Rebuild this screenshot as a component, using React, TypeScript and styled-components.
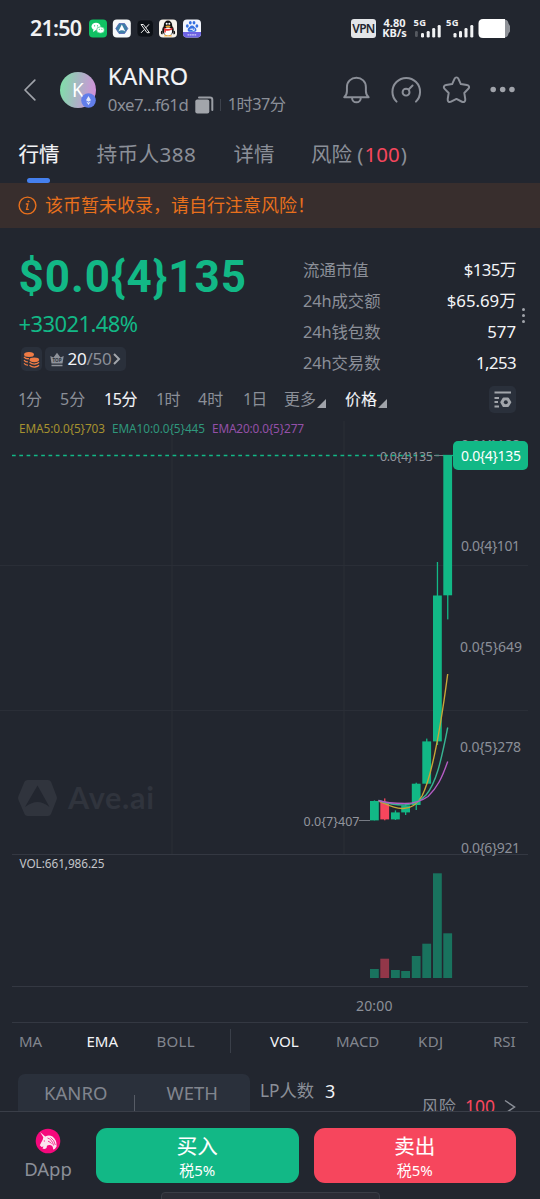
import React from "react";
import styled, { createGlobalStyle } from "styled-components";

const c = {
  bg: "#22262f",
  green: "#12b886",
  red: "#f6465d",
  grey: "#8b8f98",
  dim: "#81858e",
  white: "#f3f4f7",
  line: "#343842",
  panel: "#2a303b",
  orange: "#e8701c",
};

const family = `"Noto Sans", "Noto Sans CJK SC", sans-serif`;

const GlobalStyle = createGlobalStyle`
  * { box-sizing: border-box; }
  html, body { margin: 0; background: ${c.bg}; }
  body { font-family: ${family}; overflow: hidden; }
`;

const Screen = styled.div`
  width: 540px;
  height: 1199px;
  display: flex;
  flex-direction: column;
  overflow: hidden;
  background: ${c.bg};
  color: ${c.grey};
`;

const Text = styled.span<{ $size: number; $color?: string; $weight?: number; $spacing?: number; $stroke?: number }>`
  display: block;
  font-size: ${(p) => p.$size}px;
  line-height: ${(p) => Math.round(p.$size * 1.3)}px;
  color: ${(p) => p.$color ?? c.grey};
  font-weight: ${(p) => p.$weight ?? 400};
  letter-spacing: ${(p) => p.$spacing ?? 0}px;
  -webkit-text-stroke: ${(p) => p.$stroke ?? 0}px currentColor;
  white-space: nowrap;
`;

/* ---------- status bar ---------- */
const StatusBar = styled.div`
  flex: none;
  height: 56px;
  padding-left: 30px;
  display: flex;
  align-items: center;
`;
const AppIcons = styled.svg`
  flex: none;
  margin-left: 7px;
`;
const Clock = styled(Text)`
  width: 52px;
`;
const VpnTag = styled.span`
  flex: none;
  margin-left: 148px;
  width: 25px;
  height: 19px;
  border-radius: 3px;
  background: #e3e5e8;
  color: #22262f;
  font-size: 12px;
  font-weight: 600;
  letter-spacing: -0.7px;
  line-height: 19px;
  text-align: center;
`;
const Speed = styled.div`
  flex: none;
  width: 27px;
  margin-left: 5px;
  font-size: 11px;
  font-weight: 700;
  line-height: 10px;
  color: #f0f1f3;
  text-align: center;
  white-space: nowrap;
`;
const Signals = styled.svg`
  flex: none;
  margin-left: 5px;
  overflow: visible;
`;

/* ---------- header ---------- */
const Header = styled.header`
  flex: none;
  height: 74px;
  padding: 0 24px 6px 22px;
  display: flex;
  align-items: center;
`;
const Avatar = styled.div`
  position: relative;
  flex: none;
  width: 36px;
  height: 36px;
  margin-left: 22px;
  border-radius: 50%;
  background: linear-gradient(100deg, #7fe0a8 5%, #a9b4c4 50%, #d58fdc 95%);
  color: #fff;
  font-size: 19px;
  line-height: 36px;
  text-align: center;
`;
const ChainBadge = styled.svg`
  position: absolute;
  right: 0;
  bottom: 0;
`;
const TokenInfo = styled.div`
  flex: none;
  width: 234.5px;
  margin-left: 12px;
  padding-bottom: 2px;
`;
const TokenMeta = styled.div`
  display: flex;
  align-items: center;
  height: 26px;
`;
const Address = styled(Text)`
  width: 86px;
`;
const Sep = styled.i`
  width: 1px;
  height: 12px;
  margin: 0 7px 0 6px;
  background: #3d424c;
`;

/* ---------- tabs ---------- */
const Tabs = styled.nav`
  flex: none;
  height: 53px;
  padding: 11px 0 0 18.5px;
  display: grid;
  grid-template-columns: 78px 137px 77.5px auto;
  justify-content: start;
  align-items: start;
`;
const Tab = styled.div`
  display: flex;
  flex-direction: column;
`;
const TabMarker = styled.i`
  width: 23px;
  height: 5px;
  margin: 10px 0 0 8.5px;
  border-radius: 2.5px;
  background: #4580ee;
`;
const Risk = styled.span`
  margin: 0 1px;
  color: ${c.red};
`;

const Banner = styled.div`
  flex: none;
  height: 45px;
  padding-left: 18px;
  display: flex;
  align-items: center;
  gap: 8px;
  background: #382e2d;
`;

/* ---------- summary ---------- */
const Summary = styled.section`
  flex: none;
  height: 154px;
  display: flex;
`;
const PriceColumn = styled.div`
  width: 303px;
  padding: 21px 0 0 18.5px;
`;
const Price = styled.div`
  height: 60px;
  font-family: Roboto, "Noto Sans", sans-serif;
  font-size: 44px;
  font-weight: 700;
  letter-spacing: 1px;
  line-height: 56px;
  color: ${c.green};
`;
const Chips = styled.div`
  display: flex;
  gap: 3px;
  margin: 9px 0 0 2.5px;
`;
const Chip = styled.div`
  height: 24px;
  min-width: 21px;
  border-radius: 5px;
  background: ${c.panel};
  display: flex;
  align-items: center;
  justify-content: center;
`;
const RankChip = styled(Chip)`
  width: 81px;
`;
const Rank = styled(Text)`
  margin-left: 3px;
`;
const Stats = styled.div`
  width: 213px;
  padding-top: 26px;
`;
const StatRow = styled.div`
  height: 31px;
  display: flex;
  align-items: center;
  justify-content: space-between;
`;
const MoreDots = styled.svg`
  margin: 79px 0 0 5px;
`;

/* ---------- periods ---------- */
const Periods = styled.div`
  flex: none;
  height: 34px;
  padding-left: 18px;
  display: grid;
  grid-template-columns: 42px 44px 52px 42px 45px 41px 61px 144px 27px;
  align-items: center;
`;
const Dropdown = styled.div`
  display: flex;
  align-items: center;
  gap: 1px;
`;
const Corner = styled.i`
  width: 0;
  height: 0;
  margin-top: 9px;
  border-left: 9px solid transparent;
  border-bottom: 9px solid #a0a3aa;
`;
const SettingsButton = styled.div`
  width: 27px;
  height: 27px;
  border-radius: 5px;
  background: ${c.panel};
`;
const ChartCanvas = styled.svg`
  flex: none;
  display: block;
`;

/* ---------- indicators and pool ---------- */
const Indicators = styled.div`
  flex: none;
  height: 38px;
  padding: 0 0 2px 19px;
  display: grid;
  grid-template-columns: 67.5px 70px 73.5px 40px 66px 82px 75px 24px;
  align-items: center;
`;
const IndicatorDivider = styled.i`
  width: 1px;
  height: 24px;
  background: #3a3f49;
`;
const Pool = styled.div`
  flex: none;
  height: 50px;
  padding: 13px 0 0 18px;
  display: flex;
  align-items: flex-start;
  overflow: hidden;
`;
const PoolTokens = styled.div`
  flex: none;
  width: 232px;
  height: 50px;
  border-radius: 7px 7px 0 0;
  background: ${c.panel};
  display: flex;
`;
const PoolToken = styled.div`
  width: 116px;
  padding-top: 7px;
  display: flex;
  justify-content: center;
`;
const PoolDivider = styled.i`
  width: 1px;
  height: 30px;
  margin-top: 21px;
  background: #575c66;
`;
const Holders = styled.div`
  flex: none;
  width: 161.5px;
  margin: 6px 0 0 10px;
  display: flex;
  gap: 11px;
`;
const PoolRisk = styled.div`
  margin-top: 21px;
  display: flex;
  align-items: center;
  gap: 9px;
`;

/* ---------- footer ---------- */
const Footer = styled.footer`
  flex: none;
  height: 81px;
  border-top: 1px solid #3a3e48;
  padding: 16px 0 0 18px;
  display: flex;
`;
const DApp = styled.div`
  flex: none;
  width: 60px;
  margin-right: 18px;
  display: flex;
  flex-direction: column;
  align-items: center;
  gap: 3px;
`;
const TradeButton = styled.div<{ $bg: string }>`
  flex: none;
  width: 202.5px;
  height: 55px;
  margin-right: 15px;
  padding-top: 5px;
  border-radius: 11px;
  background: ${(p) => p.$bg};
  display: flex;
  flex-direction: column;
  align-items: center;
`;
const HomeHandle = styled.div`
  flex: none;
  width: 219px;
  height: 12px;
  margin-left: 161px;
  border: 1px solid #3a3d46;
  border-radius: 4px;
  background: #2b2c35;
`;

type Candle = { x: number; top: number; bottom: number; high: number; low: number; vol: number; down?: boolean };
const candles: Candle[] = [
  { x: 370, top: 801, bottom: 820.4, high: 800.4, low: 820.4, vol: 969 },
  { x: 380.3, top: 802, bottom: 819.4, high: 798.4, low: 820.3, vol: 958.7, down: true },
  { x: 391, top: 812.4, bottom: 819.4, high: 810.4, low: 820, vol: 970 },
  { x: 401.2, top: 805.4, bottom: 812.4, high: 803.4, low: 815, vol: 971 },
  { x: 411.8, top: 783.7, bottom: 805, high: 782.7, low: 810, vol: 956 },
  { x: 422.3, top: 741.4, bottom: 783.7, high: 738.6, low: 784.3, vol: 943.7 },
  { x: 433, top: 595.5, bottom: 741.4, high: 562, low: 745, vol: 873.3 },
  { x: 443.3, top: 455.4, bottom: 595.3, high: 455.4, low: 619.4, vol: 933.3 },
];

const axis: [string, number, number, number][] = [
  ["0.0{4}188", 461, 445, 59],
  ["0.0{4}101", 461, 546, 59],
  ["0.0{5}649", 460, 646.5, 62],
  ["0.0{5}278", 460, 747, 61],
  ["0.0{6}921", 461, 847.5, 59],
];

function Chart() {
  return (
    <ChartCanvas width="540" height="607" viewBox="0 416 540 607" fontFamily={family}>
      <g stroke="#2a2e37" strokeWidth="1">
        <path d="M172 421V854M344 421V854M0 565.5H528M0 710.5H528" />
      </g>
      <path d="M12 854.5H528M12 986.5H528M12 1022.5H528" stroke={c.line} strokeWidth="1" />
      <g fontSize="11.8">
        <text x="19" y="433" fill="#a6922f" textLength="86">EMA5:0.0{"{5}"}703</text>
        <text x="112" y="433" fill="#2f977c" textLength="93">EMA10:0.0{"{5}"}445</text>
        <text x="212" y="433" fill="#9450a8" textLength="92">EMA20:0.0{"{5}"}277</text>
        <text x="19.5" y="868" fill="#c3c5ca" textLength="85">VOL:661,986.25</text>
      </g>
      <g fill="#30343d">
        <path d="M27.5 780H48Q50 780 51 781.8L56.5 796Q57.5 798 56.5 800L51 814Q50 816 48 816H27.5Q25.5 816 24.5 814L18.5 800Q17.5 798 18.5 796L24.5 781.8Q25.5 780 27.5 780Z" />
        <path d="M37.5 785.5L49.5 807Q43 802 37.5 802Q32 802 25 807Z" fill={c.bg} />
        <text x="68" y="809" fontSize="30.5" fontWeight="700" fontFamily="Lato, sans-serif" textLength="86">Ave.ai</text>
      </g>
      {candles.map((k) => (
        <g key={k.x} fill={k.down ? c.red : c.green}>
          <rect x={k.x} y={k.top} width="8.8" height={k.bottom - k.top} />
          <rect x={k.x + 3.8} y={k.high} width="1.3" height={k.low - k.high} />
          <rect x={k.x} y={k.vol} width="8.8" height={978 - k.vol} fill={k.down ? "#923749" : "#19735e"} />
        </g>
      ))}
      <g fill="none" strokeWidth="1.4">
        <path d="M378.5 801C385 803 391 808 402 808.5C412 809 418 803 422 796C430 780 438 748 447.7 674" stroke="#c7a638" />
        <path d="M378.5 800.5C386 803 394 805 404 805C415 804.5 421 800.5 426 795C436 783 441 762 447.7 727.5" stroke="#38b392" />
        <path d="M378.5 800.5C386 803 396 803.5 405 803.5C415 803.5 423 800 428 796.5C437 788 442 778 447.7 761.5" stroke="#b55cc4" />
      </g>
      <path d="M12 455.5H443" stroke="#12b886" strokeWidth="1.3" strokeDasharray="3.7 3.6" />
      <path d="M434 455.5H443M359 820.5H370" stroke="#777b84" strokeWidth="1" />
      <path d="M443 455.5H453" stroke={c.green} strokeWidth="1.3" />
      <g fontSize="12.5" fill="#92959d">
        <text x="380" y="460.5" textLength="53">0.0{"{4}"}135</text>
        <text x="303.5" y="825.5" textLength="56">0.0{"{7}"}407</text>
      </g>
      <g fontSize="14" fill={c.grey}>
        {axis.map(([label, x, y, w]) => (
          <text key={label} x={x} y={y + 5} textLength={w}>{label}</text>
        ))}
        <text x="356" y="1011" textLength="36.5">20:00</text>
      </g>
      <rect x="453" y="441" width="75" height="29" rx="5" fill={c.green} />
      <text x="461" y="461" fontSize="14" fill="#fff" textLength="60">0.0{"{4}"}135</text>
    </ChartCanvas>
  );
}

function StatusIcons() {
  return (
    <AppIcons width="114" height="20" viewBox="89 18 114 20">
      <rect x="89" y="19.5" width="18" height="18" rx="4" fill="#10c163" />
      <ellipse cx="96" cy="26.5" rx="4.5" ry="3.8" fill="#fff" />
      <ellipse cx="100.5" cy="30" rx="3.9" ry="3.2" fill="#fff" stroke="#10c163" strokeWidth=".6" />
      <path d="M93.5 29.5L93 32L95.5 30.5Z" fill="#fff" />
      <g fill="#10c163"><circle cx="94.6" cy="25.8" r=".6" /><circle cx="97.5" cy="25.8" r=".6" /><circle cx="99.3" cy="29.3" r=".5" /><circle cx="101.9" cy="29.3" r=".5" /></g>
      <rect x="112.8" y="19.5" width="18" height="18" rx="4" fill="#f7f9fa" />
      <path d="M119 23.5H124.6L127.8 28.5L124.6 33.5H119L115.8 28.5Z" fill="#3d7fa6" stroke="#5363b2" strokeWidth=".8" strokeLinejoin="round" />
      <path d="M121.8 24.5L125.3 31.5Q121.8 29 118.3 31.5Z" fill="#fff" />
      <rect x="137" y="20" width="16.5" height="17" rx="4" fill="#0d1117" stroke="#2b2f36" strokeWidth=".6" />
      <path d="M141 24.5H143.4L149.4 32.7H147ZM149 24.3L145.9 27.8M144.3 29.5L141 32.9" fill="none" stroke="#f2f2f2" strokeWidth="1" />
      <rect x="159" y="19.5" width="18" height="18" rx="4" fill="#f7f3ec" />
      <ellipse cx="168" cy="30" rx="5.8" ry="5.5" fill="#111" />
      <ellipse cx="168" cy="25.5" rx="4.2" ry="5" fill="#111" />
      <path d="M162 31Q161 34 162.5 33.5M174 31Q175 34 173.5 33.5" stroke="#111" strokeWidth="1.5" />
      <ellipse cx="168" cy="31.5" rx="4" ry="4" fill="#fff" />
      <path d="M163.5 27.5Q168 30.5 172.5 27.5L172.3 29.5Q168 31.5 165.8 30.5V32.5H164.3V30Z" fill="#e12d2d" />
      <ellipse cx="168" cy="26.5" rx="2.6" ry=".9" fill="#f2a72c" />
      <circle cx="166.7" cy="23.8" r="1" fill="#fff" /><circle cx="169.3" cy="23.8" r="1" fill="#fff" />
      <path d="M164.5 36Q166 34.7 167.5 36ZM168.5 36Q170 34.7 171.5 36Z" fill="#f2a72c" stroke="#f2a72c" strokeWidth=".7" />
      <rect x="183" y="19.5" width="18" height="18" rx="4" fill="#f2f5fd" />
      <path d="M183 32H201V33.5Q201 37.5 197 37.5H187Q183 37.5 183 33.5Z" fill="#6d62e4" />
      <g fill="#346fe0">
        <ellipse cx="187.3" cy="26" rx="1.4" ry="1.8" /><ellipse cx="190.3" cy="22.8" rx="1.4" ry="1.8" />
        <ellipse cx="194" cy="22.8" rx="1.4" ry="1.8" /><ellipse cx="196.9" cy="26" rx="1.4" ry="1.8" />
        <path d="M192 25.5C190 25.5 189.5 27.5 188 28.5Q187 31 189 31.7H195Q197.3 31 196 28.5C194.5 27.5 194 25.5 192 25.5Z" />
      </g>
      <path d="M190 30A1 1 0 1 1 192 30V28.5M192.8 28.5V30.5H194.3V28.5" fill="none" stroke="#fff" strokeWidth=".8" />
      <path d="M187.5 34.8H196.5" stroke="#cfcaf8" strokeWidth="1.3" strokeDasharray="1.8 .5" />
    </AppIcons>
  );
}

function SignalIcons() {
  return (
    <Signals width="98" height="24" viewBox="413 16 98 24" fontFamily={family}>
      <g fill="#f1f2f4">
        <text x="413.5" y="26.2" fontSize="9.4" fontWeight="700" textLength="12.5">5G</text>
        <text x="446" y="26.2" fontSize="9.4" fontWeight="700" textLength="12.5">5G</text>
        <rect x="415" y="31" width="2.8" height="6" rx="1.2" fill="#555960" />
        <rect x="421" y="33" width="3" height="4.5" rx="1.3" />
        <rect x="426.7" y="31" width="3" height="6.5" rx="1.3" />
        <rect x="432.2" y="28" width="3" height="9.5" rx="1.3" />
        <rect x="437.7" y="25" width="3" height="12.5" rx="1.3" />
        <rect x="453.5" y="33" width="3" height="4.5" rx="1.3" />
        <rect x="459" y="31" width="3" height="6.5" rx="1.3" />
        <rect x="464.5" y="28" width="3" height="9.5" rx="1.3" />
        <rect x="470.3" y="25" width="3" height="12.5" rx="1.3" />
      </g>
      <path d="M500 19.5H504Q508 19.5 508.5 23.5L510 26V31.5L508.5 33.5Q508 37.5 504 37.5H500Z" fill="#8f9298" />
      <path d="M483 19H505V38H483Q478.5 38 478.5 33.5V23.5Q478.5 19 483 19Z" fill="#fff" />
    </Signals>
  );
}

export default function App() {
  return (
    <>
      <GlobalStyle />
      <Screen>
        <StatusBar>
          <Clock $size={21.5} $weight={600} $color="#f1f2f4" $spacing={-0.8}>21:50</Clock>
          <StatusIcons />
          <VpnTag>VPN</VpnTag>
          <Speed>4.80<br />KB/s</Speed>
          <SignalIcons />
        </StatusBar>

        <Header>
          <svg width="16" height="24" viewBox="22 78 16 24" fill="none" stroke="#a0a3aa" strokeWidth="1.7" strokeLinecap="round" strokeLinejoin="round">
            <path d="M35 80L25 90L35 100" />
          </svg>
          <Avatar>
            K
            <ChainBadge width="15" height="15" viewBox="0 0 15 15">
              <circle cx="7.5" cy="7.5" r="7.3" fill="#627eea" />
              <path d="M7.5 3L10 7.2L7.5 8.7L5 7.2ZM5.2 8.5L7.5 12L9.8 8.5L7.5 9.8Z" fill="#e4e9fb" />
            </ChainBadge>
          </Avatar>
          <TokenInfo>
            <Text $size={23.5} $stroke={0.15} $color={c.white}>KANRO</Text>
            <TokenMeta>
              <Address $size={16.8} $spacing={-0.5}>0xe7...f61d</Address>
              <svg width="20" height="20" viewBox="194 95 20 20">
                <path d="M199 97.5H210Q212.3 97.5 212.3 99.8V110" fill="none" stroke="#9a9da4" strokeWidth="2" strokeLinecap="round" />
                <rect x="195.3" y="99.5" width="14" height="14" rx="2" fill="#a2a5ab" />
              </svg>
              <Sep />
              <Text $size={16.2} $spacing={-0.5}>1时37分</Text>
            </TokenMeta>
          </TokenInfo>
          <svg width="176" height="32" viewBox="342 74 176 32" fill="none" stroke={c.grey} strokeWidth="2" strokeLinecap="round" strokeLinejoin="round">
            <path d="M344.2 97.3H369C366.8 95.5 366.2 93.5 366.2 91V87C366.2 81.5 362 77.6 356.6 77.6S347 81.5 347 87V91C347 93.5 346.4 95.5 344.2 97.3ZM352.2 98C352.2 100.5 354 102.4 356.6 102.4S361 100.5 361 98" />
            <path d="M397.3 101.8A14 14 0 1 1 416.9 101.8M409.5 89.5L413.5 85.5" />
            <circle cx="406.9" cy="92.2" r="3.5" />
            <path d="M458 77.2C459 77.2 459.6 77.8 460 78.7L462.4 84L468.5 85C471 85.5 471.5 87.3 470 88.8L465.9 93L466.9 99.2C467.2 101.6 465.5 102.9 463.5 101.9L458 99L452.5 101.9C450.5 102.9 448.8 101.6 449.1 99.2L450.1 93L446 88.8C444.5 87.3 445 85.5 447.5 85L453.6 84L456 78.7C456.4 77.8 457 77.2 458 77.2Z" />
            <g fill="#a0a3aa" stroke="none"><circle cx="495.2" cy="89.6" r="2.8" /><circle cx="504.8" cy="89.6" r="2.8" /><circle cx="514.2" cy="89.6" r="2.8" /></g>
          </svg>
        </Header>

        <Tabs>
          <Tab>
            <Text $size={20.5} $stroke={0.15} $color={c.white}>行情</Text>
            <TabMarker />
          </Tab>
          <Tab><Text $size={20.7} $spacing={0.35}>持币人388</Text></Tab>
          <Tab><Text $size={20.5}>详情</Text></Tab>
          <Tab><Text $size={20.5}>风险 (<Risk>100</Risk>)</Text></Tab>
        </Tabs>

        <Banner>
          <svg width="19" height="19" viewBox="0 0 19 19" fill="none" stroke={c.orange} strokeLinecap="round">
            <circle cx="9.5" cy="9.5" r="8.4" strokeWidth="1.4" />
            <path d="M8.3 8H9.9L8.6 13.3H10.3" strokeWidth="1.3" />
            <circle cx="10.4" cy="5.4" r=".6" fill={c.orange} strokeWidth=".8" />
          </svg>
          <Text $size={18} $color={c.orange}>该币暂未收录，请自行注意风险！</Text>
        </Banner>

        <Summary>
          <PriceColumn>
            <Price>$0.0{"{4}"}135</Price>
            <Text $size={22} $color={c.green} $spacing={-0.6}>+33021.48%</Text>
            <Chips>
              <Chip>
                <svg width="17" height="17" viewBox="0 0 17 17" fill="#ef7b45">
                  <ellipse cx="6" cy="3.5" rx="5" ry="2.5" />
                  <path d="M1 6Q3 8.2 6 7.6M1 9.2Q3 11.2 5 10.9M1 12.4Q3 14.4 5 14.2" fill="none" stroke="#ef7b45" strokeWidth="1.3" />
                  <ellipse cx="11.3" cy="8.8" rx="4.8" ry="2.4" />
                  <path d="M6.5 11.2Q9 13.3 12 13Q15 12.7 16 11.2M6.5 14.2Q9 16.3 12 16Q15 15.7 16 14.2" fill="none" stroke="#ef7b45" strokeWidth="1.3" />
                </svg>
              </Chip>
              <RankChip>
                <svg width="14" height="15" viewBox="0 0 14 15">
                  <path d="M.3 4L3.5 5.5L7 .8L10.5 5.5L13.7 4L12.5 11.5H1.5Z" fill="#8e929a" />
                  <path d="M1.5 13.5H12.5" stroke="#8e929a" strokeWidth="1.5" />
                  <text x="7" y="10" fontSize="4.6" fontWeight="700" textAnchor="middle" fill={c.panel}>TOP</text>
                </svg>
                <Rank $size={17} $color={c.white} $spacing={-0.2}>20</Rank>
                <Text $size={17} $spacing={-0.2}>/50</Text>
                <svg width="9" height="14" viewBox="0 0 9 14" fill="none" stroke="#a2a5ab" strokeWidth="2"><path d="M2 2L7 7L2 12" /></svg>
              </RankChip>
            </Chips>
          </PriceColumn>
          <Stats>
            <StatRow><Text $size={16.4}>流通市值</Text><Text $size={16.8} $spacing={-0.6} $color={c.white}>$135万</Text></StatRow>
            <StatRow><Text $size={16.4} $spacing={-0.1}>24h成交额</Text><Text $size={16.8} $color={c.white}>$65.69万</Text></StatRow>
            <StatRow><Text $size={16.4} $spacing={-0.1}>24h钱包数</Text><Text $size={16.8} $color={c.white}>577</Text></StatRow>
            <StatRow><Text $size={16.4} $spacing={-0.1}>24h交易数</Text><Text $size={16.8} $spacing={-0.6} $color={c.white}>1,253</Text></StatRow>
          </Stats>
          <MoreDots width="5" height="18" viewBox="0 0 5 18" fill="#a0a3aa">
            <circle cx="2.5" cy="2.5" r="1.5" /><circle cx="2.5" cy="8.5" r="1.5" /><circle cx="2.5" cy="14.5" r="1.5" />
          </MoreDots>
        </Summary>

        <Periods>
          <Text $size={16} $spacing={-1.2}>1分</Text>
          <Text $size={16}>5分</Text>
          <Text $size={16} $stroke={0.1} $spacing={-0.4} $color={c.white}>15分</Text>
          <Text $size={16} $spacing={-0.6}>1时</Text>
          <Text $size={16}>4时</Text>
          <Text $size={16} $spacing={-0.8}>1日</Text>
          <Dropdown><Text $size={16}>更多</Text><Corner /></Dropdown>
          <Dropdown><Text $size={16} $stroke={0.1} $color={c.white}>价格</Text><Corner /></Dropdown>
          <SettingsButton>
            <svg width="27" height="27" viewBox="0 0 27 27" fill="none" stroke="#a2a5ab" strokeWidth="2">
              <path d="M5.5 6.5H22M5.5 12H10M5.5 16H9M5.5 20.5H10" strokeWidth="1.8" />
              <path d="M14.5 12.5H19L21.3 16.2L19 20H14.5L12.3 16.2Z" fill="#a2a5ab" strokeLinejoin="round" />
              <circle cx="16.8" cy="16.2" r="2" fill={c.panel} stroke="none" />
            </svg>
          </SettingsButton>
        </Periods>

        <Chart />

        <Indicators>
          <Text $size={15} $color={c.dim}>MA</Text>
          <Text $size={15} $color={c.white}>EMA</Text>
          <Text $size={15} $spacing={0.3} $color={c.dim}>BOLL</Text>
          <IndicatorDivider />
          <Text $size={15.2} $color={c.white}>VOL</Text>
          <Text $size={15} $color={c.dim}>MACD</Text>
          <Text $size={15} $spacing={0.4} $color={c.dim}>KDJ</Text>
          <Text $size={15} $color={c.dim}>RSI</Text>
        </Indicators>

        <Pool>
          <PoolTokens>
            <PoolToken><Text $size={18.5} $color={c.dim}>KANRO</Text></PoolToken>
            <PoolDivider />
            <PoolToken><Text $size={18.5} $color={c.dim}>WETH</Text></PoolToken>
          </PoolTokens>
          <Holders>
            <Text $size={17.3}>LP人数</Text>
            <Text $size={18} $color={c.white}>3</Text>
          </Holders>
          <PoolRisk>
            <Text $size={17.2}>风险</Text>
            <Text $size={17.5} $color={c.red}>100</Text>
            <svg width="12" height="16" viewBox="0 0 12 16" fill="none" stroke={c.grey} strokeWidth="1.5"><path d="M1 1.5L10.5 8L1 14.5" /></svg>
          </PoolRisk>
        </Pool>

        <Footer>
          <DApp>
            <svg width="26" height="26" viewBox="0 0 26 26">
              <circle cx="13" cy="13" r="12.3" fill="#f5087c" />
              <path d="M5 4L10.2 8.6Q14 6.2 17.5 8.6Q22 12 21.6 18.5Q20.5 21 18 21.5Q18.5 18.5 16 17.2Q13.5 16.5 12 17.8L11.5 20Q9.5 21.5 7.5 20.5L8.5 18.5L6.5 19L4.8 17.2L7.8 11.5L8.3 9.2Z" fill="#fbe5ef" />
              <path d="M12.5 10Q17 11.2 18.6 17.5M15.5 9.5Q19.5 12 20.3 17M8.8 13H10M13 13.2Q15 13.6 16.5 15.7" fill="none" stroke="#f5087c" strokeWidth=".8" />
            </svg>
            <Text $size={18.5}>DApp</Text>
          </DApp>
          <TradeButton $bg={c.green}>
            <Text $size={20.5} $color="#fff" $stroke={0.1}>买入</Text>
            <Text $size={15} $color="#fff">税5%</Text>
          </TradeButton>
          <TradeButton $bg={c.red}>
            <Text $size={20.5} $color="#fff" $stroke={0.1}>卖出</Text>
            <Text $size={15} $color="#fff">税5%</Text>
          </TradeButton>
        </Footer>
        <HomeHandle />
      </Screen>
    </>
  );
}
